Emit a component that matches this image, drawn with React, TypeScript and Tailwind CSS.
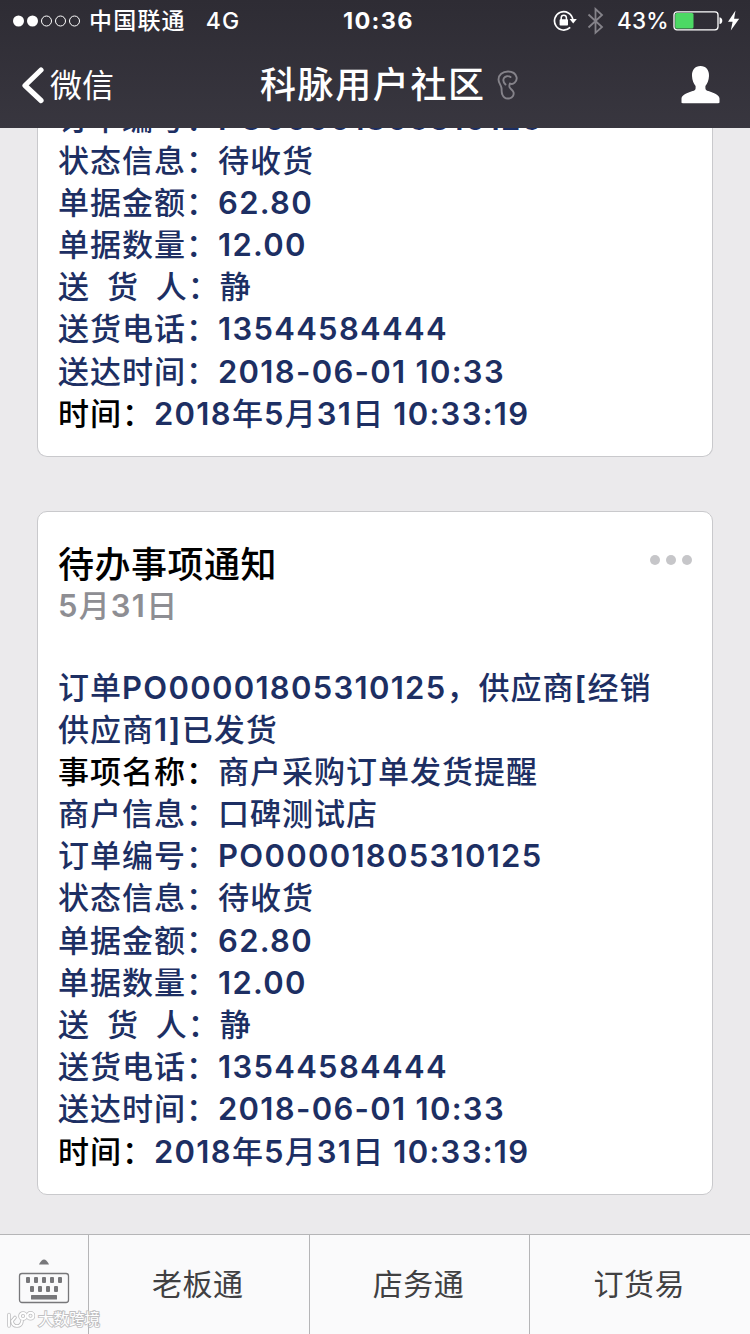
import { ReactNode } from "react";

type Line = {
  label: string;
  value: string;
  dark?: boolean;
};

const orderLines: Line[] = [
  { label: "订单编号：", value: "PO00001805310125" },
  { label: "状态信息：", value: "待收货" },
  { label: "单据金额：", value: "62.80" },
  { label: "单据数量：", value: "12.00" },
  { label: "送  货  人：", value: "静" },
  { label: "送货电话：", value: "13544584444" },
  { label: "送达时间：", value: "2018-06-01 10:33" },
  { label: "时间：", value: "2018年5月31日 10:33:19", dark: true },
];

const noticeLines: Line[] = [
  { label: "事项名称：", value: "商户采购订单发货提醒", dark: true },
  { label: "商户信息：", value: "口碑测试店" },
  ...orderLines,
];

const menus = ["老板通", "店务通", "订货易"];

const StatusBar = () => (
  <div className="flex h-[41px] items-center pl-3 pr-2 text-[23px] font-medium">
    <div className="flex w-[331px] items-center">
      <svg width="70" height="12" viewBox="0 0 70 12" fill="none" stroke="#fff">
        <circle cx="6.5" cy="6" r="5.5" fill="#fff" stroke="none" />
        <circle cx="20.5" cy="6" r="5.5" fill="#fff" stroke="none" />
        <circle cx="34.5" cy="6" r="5" />
        <circle cx="48.5" cy="6" r="5" />
        <circle cx="62.5" cy="6" r="5" />
      </svg>
      <span className="ml-[7px] pt-px tracking-[1.2px]">中国联通</span>
      <span className="ml-5 pt-px tracking-[1px]">4G</span>
    </div>
    <span className="w-[210px] text-[23.5px] font-bold tracking-[1.3px]">10:36</span>
    <svg width="24" height="22" viewBox="0 0 24 22" fill="none" stroke="#fff" strokeWidth="1.7">
      <path d="M17.2 17.4A9.2 9.2 0 1 1 19.8 9.4" />
      <path d="M16.6 9h7.2l-3.6 4.4z" fill="#fff" stroke="none" />
      <rect x="6.6" y="9.2" width="8.4" height="6.4" rx="0.8" fill="#fff" stroke="none" />
      <path d="M8.2 10V7.8a2.6 2.6 0 0 1 5.2 0V10" strokeWidth="1.5" />
    </svg>
    <svg className="ml-2.5" width="18" height="28" viewBox="0 0 18 28" fill="none" stroke="#85838a" strokeWidth="1.8">
      <path d="M1.5 7.5L15 20l-6.5 5.8V2L15 8 1.5 20.5" />
    </svg>
    <span className="ml-3 w-[56px] text-[22.5px] tracking-[0.2px]">43%</span>
    <svg width="67" height="22" viewBox="0 0 67 22">
      <rect x="1" y="1.8" width="44" height="18" rx="3" fill="none" stroke="#fff" strokeWidth="1.3" />
      <rect x="2.2" y="3" width="18.3" height="15.6" rx="1.5" fill="#4cd964" />
      <path d="M46.5 7.3q2.8.6 2.8 3.4t-2.8 3.4z" fill="#fff" />
      <path d="M62.5 .5L55 11.8h4.6L57.8 20.5 66.2 8.8h-5.1z" fill="#fff" />
    </svg>
  </div>
);

const Header = () => (
  <header className="h-32 shrink-0 bg-linear-to-b from-[#2e2c34] to-[#38363f] text-white">
    <StatusBar />
    <div className="flex h-[87px] items-center pl-[21px] pr-[30px]">
      <div className="flex w-[239px] items-center">
        <svg width="24" height="38" viewBox="0 0 24 38" fill="none" stroke="#fff" strokeWidth="5.2" strokeLinecap="round" strokeLinejoin="round">
          <path d="M20 4L4 19.5 20 34.5" />
        </svg>
        <span className="ml-[5px] pt-[2px] text-[32px] leading-10">微信</span>
      </div>
      <h1 className="text-[36px] font-medium leading-[44px] tracking-[1.6px]">科脉用户社区</h1>
      <svg className="ml-2.5" width="24" height="30" viewBox="0 0 24 30" fill="none" stroke="#85838a" strokeWidth="1.9" strokeLinecap="round" strokeLinejoin="round">
        <path d="M14 13.5c1.5.9 3.4.4 4.7-.9C20.4 11 21 9 20.5 7 19.5 3.5 16 1.500 12 1.500 6.500 1.500 2.500 5 2.500 9.500c0 3.500 2.600 5.500 3 8.500.3 2.300-.2 4.200.8 6.500 1.200 3 4.200 4.600 7.400 3.800 3-.8 4.500-3.400 3.800-6-.7-2.300-3.300-3.200-4-5.300-.3-1.200 0-2.400.5-3.500" />
        <path d="M9.500 14.500C7.500 12.500 6.800 10 8 8c1.200-1.900 4.300-2.600 6.500-.9" />
      </svg>
      <svg className="ml-auto" width="39" height="38" viewBox="0 0 39 38" fill="#fff">
        <path d="M19.5 0c5.500 0 8.800 4 8.500 10-.2 4.500-1.600 7.300-3.600 10v2.200c0 1.600 1 2.200 3 2.900 5.500 2 10.600 3.500 11.100 7.500v3.500c0 .8-.4 1.200-1.200 1.200H1.700c-.8 0-1.200-.4-1.200-1.200v-3.500c.5-4 5.600-5.500 11.100-7.500 2-.7 3-1.300 3-2.900V20C12.600 17.300 11.200 14.500 11 10 10.700 4 14 0 19.500 0z" />
      </svg>
    </div>
  </header>
);

// latin runs are set a little wider and heavier than the chinese text around them
const Mixed = ({ text }: { text: string }) => (
  <>
    {text.split(/([\x20-\x7e]+)/).map((part, i) =>
      i % 2 ? (
        <span key={i} className="font-semibold tracking-[1.3px]">{part}</span>
      ) : (
        part
      )
    )}
  </>
);

const Lines = ({ lines }: { lines: Line[] }) => (
  <>
    {lines.map((line) => (
      <p key={line.label} className="whitespace-pre">
        <span className={line.dark ? "text-black [word-spacing:-0.8px]" : "[word-spacing:-0.8px]"}>
          {line.label}
        </span>
        <Mixed text={line.value} />
      </p>
    ))}
  </>
);

const CardBody = ({ children }: { children: ReactNode }) => (
  <div className="text-[31px] font-medium leading-[42.18px] tracking-[1px] text-[#1d2f63]">
    {children}
  </div>
);

const Keyboard = () => (
  <svg width="52" height="48" viewBox="0 0 52 48" fill="#77777a">
    <path d="M21 6.5q.5-1.500 2.500-3.800 2.500-2.500 5 0 2 2.300 2.500 3.800z" />
    <rect x="1.5" y="15.5" width="49" height="29" rx="2.5" fill="none" stroke="#77777a" strokeWidth="1.3" />
    {[8, 16, 24, 32, 40].map((x) => (
      <rect key={x} x={x} y="19" width="4" height="6" rx="1" />
    ))}
    {[12, 20, 28, 36].map((x) => (
      <rect key={x} x={x} y="28" width="4" height="6" rx="1" />
    ))}
    <rect x="13" y="37" width="26" height="4.5" rx="0.5" />
  </svg>
);

const Watermark = () => (
  <div className="absolute bottom-1 left-[7px] flex items-center gap-[3px]">
    <svg width="28" height="18" viewBox="0 0 28 18" fill="none" strokeLinecap="round">
      <g stroke="#c0c0c2" strokeWidth="3.6">
        <path d="M2 3.500v11.500M8 6.500L5 10q.5 5 5 5t5-5" />
        <circle cx="16" cy="5" r="3" />
        <circle cx="23.5" cy="4.8" r="3" />
      </g>
      <g stroke="#fff" strokeWidth="1.9">
        <path d="M2 3.500v11.500M8 6.500L5 10q.5 5 5 5t5-5" />
        <circle cx="16" cy="5" r="3" />
        <circle cx="23.5" cy="4.8" r="3" />
      </g>
    </svg>
    <span className="text-[15.5px] leading-5 text-white [-webkit-text-stroke:1.8px_#c0c0c2] [paint-order:stroke_fill]">
      大数跨境
    </span>
  </div>
);

const App = () => {
  return (
    <div className="flex h-[1334px] w-[750px] flex-col overflow-hidden bg-[#ebeaec] font-['Inter','Noto_Sans_CJK_SC',sans-serif]">
      <Header />

      <main className="flex h-[1106px] shrink-0 flex-col justify-end gap-[54px] overflow-hidden px-[37px] pb-[39px]">
        <section className="shrink-0 rounded-b-[10px] border border-t-0 border-[#c9c9cc] bg-white px-5 pb-[21px]">
          <CardBody>
            <Lines lines={orderLines} />
          </CardBody>
        </section>

        <section className="h-[684px] shrink-0 rounded-[10px] border border-[#c9c9cc] bg-white px-5 pt-[30px]">
          <div className="flex items-start justify-between">
            <h2 className="text-[36px] font-medium leading-[46px] tracking-[0.5px] text-black">待办事项通知</h2>
            <div className="mt-[13px] flex gap-[6px]">
              <span className="size-2.5 rounded-full bg-[#c6c6c9]"></span>
              <span className="size-2.5 rounded-full bg-[#c6c6c9]"></span>
              <span className="size-2.5 rounded-full bg-[#c6c6c9]"></span>
            </div>
          </div>
          <p className="mb-[42.5px] text-[31px] font-medium leading-9 tracking-[1px] text-[#8e8e93]">
            <Mixed text="5月31日" />
          </p>
          <CardBody>
            <p className="whitespace-pre">
              <Mixed text="订单PO00001805310125，供应商[经销" />
            </p>
            <p>
              <Mixed text="供应商1]已发货" />
            </p>
            <Lines lines={noticeLines} />
          </CardBody>
        </section>
      </main>

      <footer className="relative flex h-[100px] shrink-0 border-t border-[#b5b5b7] bg-[#fafafb]">
        <div className="flex w-[88px] justify-center pt-[23px]">
          <Keyboard />
        </div>
        {menus.map((menu) => (
          <div
            key={menu}
            className="flex flex-1 items-center justify-center border-l border-[#b5b5b7] pr-[2px] text-[30px] tracking-[0.5px] text-[#404042]"
          >
            {menu}
          </div>
        ))}
        <Watermark />
      </footer>
    </div>
  );
};

export default App;
